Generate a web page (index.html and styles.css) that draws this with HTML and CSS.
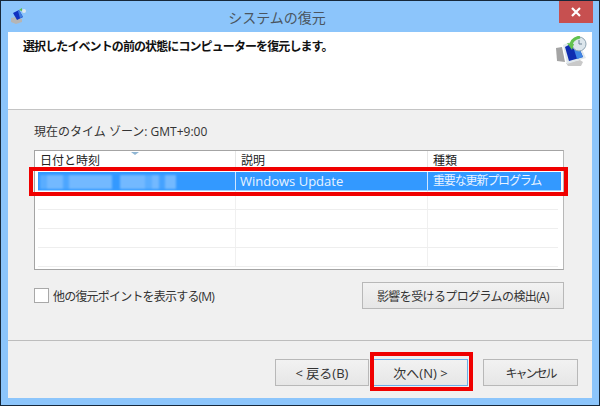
FILE: index.html
```html
<!DOCTYPE html>
<html lang="ja">
<head>
<meta charset="utf-8">
<title>システムの復元</title>
<link rel="stylesheet" href="styles.css">
</head>
<body>
<div class="window">
  <div class="titlebar">
    <svg class="title-icon" width="16" height="16" viewBox="0 0 16 16">
      <path d="M1 10l5-1 6 2v3l-6 2-5-2z" fill="#b5b5b5"/>
      <path d="M3 5l6-3 4 7-6 3z" fill="#1030c0"/>
      <path d="M8 3l1-1 4 7-3 1z" fill="#3f7fe0"/>
      <path d="M9 2l3-2v3z" fill="#5cc04a"/>
      <circle cx="14" cy="3" r="2" fill="#dfe8ee"/>
    </svg>
    <div class="title">システムの復元</div>
    <div class="close">
      <svg width="10" height="10" viewBox="0 0 10 10"><path d="M1 1l8 8M9 1l-8 8" stroke="#fff" stroke-width="2.2"/></svg>
    </div>
  </div>
  <div class="client">
    <div class="header">
      <div class="heading">選択したイベントの前の状態にコンピューターを復元します。</div>
      <svg class="header-icon" width="32" height="32" viewBox="0 0 32 32">
        <path d="M0 12l6-1 3 15-8-1z" fill="#a4a4a4"/>
        <path d="M10 27l14-3 3 2-2 4H12z" fill="#c9c9c9"/>
        <path d="M7 9l14-6 9 19-19 6z" fill="#dfe7ec"/>
        <path d="M9 11l11-6 7 16-14 4z" fill="#0f2cb0"/>
        <path d="M16 7l4-2 7 16-6 2z" fill="#3f86e4"/>
        <circle cx="23" cy="8" r="7" fill="#dce6ec" stroke="#8fa4b2"/>
        <path d="M23 4v4h3" stroke="#6c8294" fill="none"/>
        <path d="M15 10c0-5 4-8 9-9" stroke="#62c24e" stroke-width="3" fill="none"/>
        <path d="M11 7l7 1-2 6z" fill="#62c24e"/>
      </svg>
    </div>
    <div class="body">
      <div class="timezone">現在のタイム ゾーン: GMT+9:00</div>
      <div class="list">
        <span class="sort-arrow"></span>
        <div class="row head">
          <div class="cell c1">日付と時刻</div>
          <div class="cell c2">説明</div>
          <div class="cell c3">種類</div>
        </div>
        <div class="row selected">
          <div class="cell c1">
            <div class="mosaic">
              <span class="m m1"></span><span class="m m2"></span>
            </div>
          </div>
          <div class="cell c2">Windows Update</div>
          <div class="cell c3">重要な更新プログラム</div>
        </div>
        <div class="row blank"><div class="cell c1"></div><div class="cell c2"></div><div class="cell c3"></div></div>
        <div class="row blank"><div class="cell c1"></div><div class="cell c2"></div><div class="cell c3"></div></div>
        <div class="row blank"><div class="cell c1"></div><div class="cell c2"></div><div class="cell c3"></div></div>
        <div class="row blank last"><div class="cell c1"></div><div class="cell c2"></div><div class="cell c3"></div></div>
      </div>
      <div class="options">
        <label class="check"><span class="box"></span><span class="check-label">他の復元ポイントを表示する(M)</span></label>
        <div class="btn detect">影響を受けるプログラムの検出(A)</div>
      </div>
    </div>
    <div class="footer">
      <div class="btn back">&lt; 戻る(B)</div>
      <div class="btn next">次へ(N) &gt;</div>
      <div class="btn cancel">キャンセル</div>
    </div>
  </div>
  <div class="mark mark-row"></div>
  <div class="mark mark-next"></div>
</div>
</body>
</html>
```
FILE: styles.css
```css
* { box-sizing: border-box; }
html, body { margin: 0; padding: 0; }
body {
  width: 600px;
  height: 406px;
  overflow: hidden;
  font-family: "Open Sans", "Noto Sans CJK JP", sans-serif;
  font-size: 12px;
  color: #222;
}
.window {
  position: relative;
  width: 600px;
  height: 406px;
  background: #8cc5fb;
  border: 1px solid #16283a;
  display: flex;
  flex-direction: column;
  padding: 0 7px 7px;
}
.titlebar {
  height: 31px;
  flex: none;
  display: flex;
  align-items: center;
  position: relative;
}
.title-icon { margin: 0 0 0 2px; position: relative; top: -1px; }
.title {
  position: absolute;
  left: 0;
  right: 46px;
  text-align: center;
  font-size: 14px;
  color: #4a5560;
  top: 6px;
  line-height: 22px;
}
.close {
  position: absolute;
  right: -1px;
  top: 0;
  width: 34px;
  height: 22px;
  background: #c75050;
  display: flex;
  align-items: center;
  justify-content: center;
}
.client {
  flex: 1;
  background: #f0f0f0;
  display: flex;
  flex-direction: column;
}
.header {
  height: 78px;
  flex: none;
  background: #fff;
  border-bottom: 1px solid #c4c4c4;
  display: flex;
  justify-content: space-between;
  align-items: flex-start;
  padding: 5px 4px 0 15px;
}
.heading {
  font-weight: 700;
  font-size: 12px;
  line-height: 20px;
  letter-spacing: -0.9px;
  color: #111;
}
.header-icon { margin-top: -1px; }
.body {
  flex: 1;
  padding: 13px 27px 0 26px;
  border-bottom: 1px solid #bdbdbd;
}
.timezone {
  line-height: 18px;
  font-size: 12px;
  color: #333;
  margin-bottom: 9px;
}
.list {
  position: relative;
  width: 530px;
  height: 120px;
  background: #fff;
  border: 1px solid #a4a4a4;
  border-right-color: #b8b8b8;
  padding-right: 2px;
}
.sort-arrow {
  position: absolute;
  left: 96px;
  top: 1px;
  width: 0;
  height: 0;
  border-left: 4px solid transparent;
  border-right: 4px solid transparent;
  border-top: 3px solid #8fb6d4;
}
.row { display: flex; height: 19px; }
.cell {
  padding-left: 5px;
  white-space: nowrap;
  line-height: 19px;
  overflow: hidden;
}
.c1 { width: 201px; }
.c2 { width: 192px; }
.c3 { flex: 1; }
.head { height: 21px; }
.head .cell {
  line-height: 20px;
  color: #222;
  border-right: 1px solid #e6e6e6;
  height: 19px;
}
.head .c3 { border-right: 0; }
.selected {
  margin-left: 3px;
  height: 19px;
  background: #3399ff;
  color: #e8f3ff;
  border-bottom: 1px solid #9fd0ff;
}
.selected .cell { line-height: 18px; font-size: 13px; }
.selected .c3 { font-size: 12px; letter-spacing: -1.15px; }
.selected .c1 { width: 198px; padding-left: 2px; border-right: 1px solid #cfe6ff; }
.selected .c2 { border-right: 1px solid #cfe6ff; padding-left: 4px; }
.mosaic { display: flex; height: 14px; margin-top: 3px; gap: 8px; }
.m { display: block; height: 14px; filter: blur(1px); }
.m1 {
  width: 72px;
  background: linear-gradient(90deg, #5aadff 0 10%, #73b9ff 10% 32%, #4da6ff 32% 40%, #73b9ff 40% 100%);
}
.m2 {
  width: 56px;
  background: linear-gradient(90deg, #73b9ff 0 45%, #5aadff 45% 58%, #73b9ff 58% 70%, #45a2ff 70% 80%, #73b9ff 80%);
}
.blank { height: 19px; border-bottom: 1px solid #eee; margin: 0 3px; }
.blank .c1 { width: 198px; border-right: 1px solid #f0f0f0; }
.blank .c2 { border-right: 1px solid #f0f0f0; }
.options {
  display: flex;
  justify-content: space-between;
  align-items: center;
  width: 530px;
  margin-top: 12px;
}
.check { display: flex; align-items: center; color: #333; font-size: 12px; }
.check-label { letter-spacing: -0.8px; }
.box {
  width: 15px;
  height: 15px;
  background: #fff;
  border: 1px solid #a8a8a8;
  margin-right: 4px;
}
.btn {
  display: flex;
  align-items: center;
  justify-content: center;
  height: 27px;
  background: linear-gradient(#f2f2f2, #e6e6e6);
  border: 1px solid #b8b8b8;
  color: #333;
  font-size: 12px;
}
.detect { width: 202px; letter-spacing: -0.6px; }
.footer {
  height: 57px;
  flex: none;
  display: flex;
  justify-content: flex-end;
  padding: 18px 14px 0 0;
}
.back { width: 94px; margin-right: 4px; font-size: 13px; }
.next { width: 95px; margin-right: 15px; border-color: #6aaee8; font-size: 13px; }
.cancel { width: 95px; letter-spacing: -2px; }
.mark {
  position: absolute;
  border: 4px solid #f00000;
}
.mark-row { left: 28px; top: 166px; width: 539px; height: 29px; }
.mark-next { left: 369px; top: 351px; width: 103px; height: 39px; }
```
